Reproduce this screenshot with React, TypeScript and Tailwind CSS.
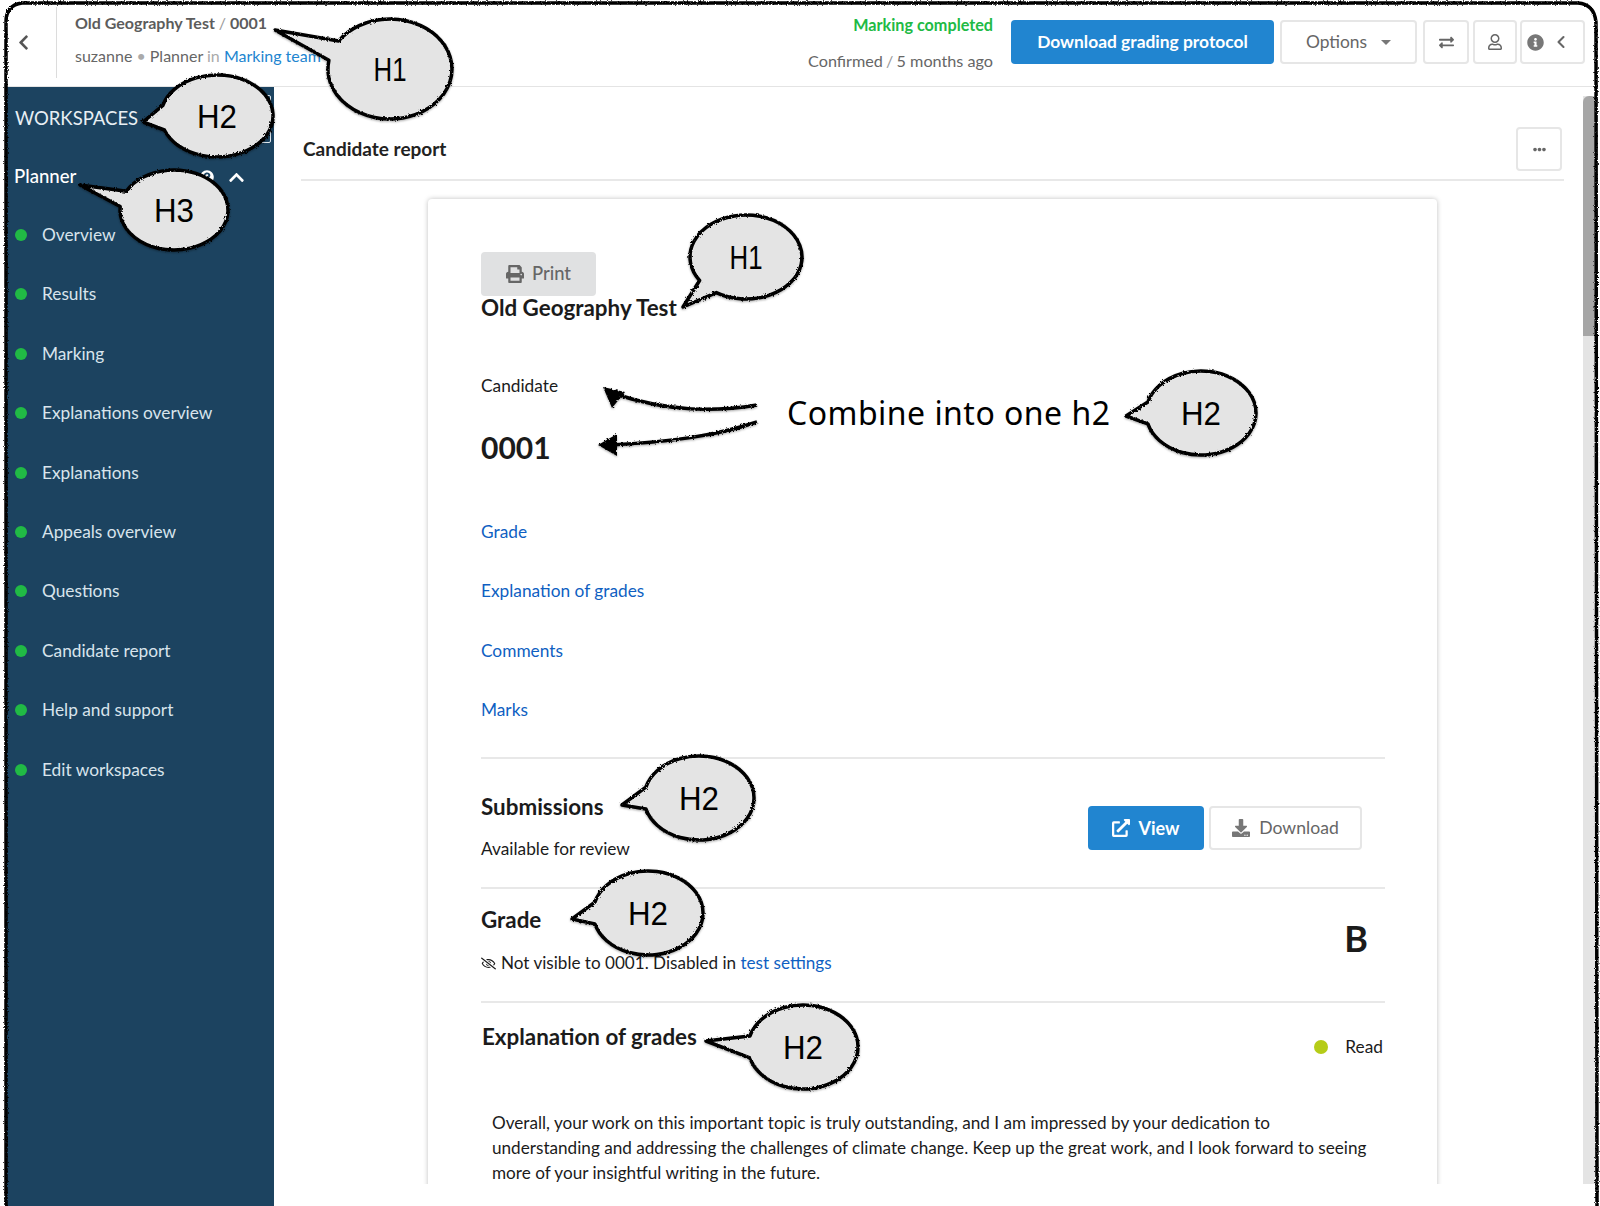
import React from "react";
import {
  FaChevronLeft,
  FaChevronUp,
  FaDownload,
  FaEllipsisH,
  FaExchangeAlt,
  FaExternalLinkAlt,
  FaInfoCircle,
  FaPrint,
  FaQuestionCircle,
  FaRegEyeSlash,
  FaRegUser,
} from "react-icons/fa";
import { ChevronLeft } from "lucide-react";

const navItems = [
  "Overview",
  "Results",
  "Marking",
  "Explanations overview",
  "Explanations",
  "Appeals overview",
  "Questions",
  "Candidate report",
  "Help and support",
  "Edit workspaces",
];

const links = ["Grade", "Explanation of grades", "Comments", "Marks"];

function Callout({
  cx,
  cy,
  rx,
  ry,
  a1,
  a2,
  tip,
  label,
}: {
  cx: number;
  cy: number;
  rx: number;
  ry: number;
  a1: number;
  a2: number;
  tip: [number, number];
  label: string;
}) {
  const p = (a: number) => {
    const r = (a * Math.PI) / 180;
    return `${(cx + rx * Math.cos(r)).toFixed(1)} ${(cy + ry * Math.sin(r)).toFixed(1)}`;
  };
  const d = `M${p(a1)} A${rx} ${ry} 0 1 1 ${p(a2)} L${tip[0]} ${tip[1]} Z`;
  return (
    <g>
      <path d={d} fill="#e4e4e4" stroke="#000" strokeWidth="3.5" strokeLinejoin="round" filter="url(#rough)" />
      <text
        x={cx}
        y={cy + 12}
        textAnchor="middle"
        fontSize="33"
        fontFamily="'Liberation Sans', sans-serif"
        fill="#000"
        textLength={label === "H1" ? 33 : 40}
        lengthAdjust="spacingAndGlyphs"
      >
        {label}
      </text>
    </g>
  );
}

function Annotations() {
  return (
    <svg className="absolute inset-0 pointer-events-none" width="1600" height="1206" viewBox="0 0 1600 1206">
      <defs>
        <filter id="rough" x="-10%" y="-10%" width="120%" height="120%">
          <feTurbulence type="fractalNoise" baseFrequency="0.55" numOctaves="2" seed="3" result="n" />
          <feDisplacementMap in="SourceGraphic" in2="n" scale="3" result="d" />
          <feDropShadow in="d" dx="0" dy="1" stdDeviation="1.2" floodColor="#000" floodOpacity="0.35" />
        </filter>
        <filter id="edge" filterUnits="userSpaceOnUse" x="0" y="0" width="1600" height="1206">
          <feTurbulence type="fractalNoise" baseFrequency="0.8" numOctaves="2" seed="5" result="n" />
          <feDisplacementMap in="SourceGraphic" in2="n" scale="3" />
        </filter>
      </defs>
      <path
        d="M6 1206 L6 22 Q6 5 22 3 L1578 3 Q1594 4 1596 22 L1597 1206"
        fill="none"
        stroke="#000"
        strokeWidth="3.5"
        filter="url(#edge)"
      />
      <Callout cx={390} cy={69} rx={62} ry={50} a1={214} a2={190} tip={[275, 30]} label="H1" />
      <Callout cx={217} cy={116} rx={56} ry={41} a1={195} a2={160} tip={[143, 122]} label="H2" />
      <Callout cx={174} cy={210} rx={54} ry={40} a1={208} a2={185} tip={[80, 185]} label="H3" />
      <Callout cx={746} cy={257} rx={56} ry={42} a1={146} a2={122} tip={[683, 307]} label="H1" />
      <Callout cx={1201} cy={413} rx={55} ry={42} a1={195} a2={165} tip={[1126, 416]} label="H2" />
      <Callout cx={699} cy={798} rx={55} ry={42} a1={195} a2={165} tip={[622, 805]} label="H2" />
      <Callout cx={648} cy={913} rx={55} ry={42} a1={195} a2={165} tip={[572, 919]} label="H2" />
      <Callout cx={803} cy={1047} rx={55} ry={42} a1={195} a2={165} tip={[706, 1041]} label="H2" />
      <text
        x="787"
        y="425"
        fontSize="32"
        fontFamily="'Noto Sans', sans-serif"
        fill="#000"
        textLength="323"
        lengthAdjust="spacing"
      >
        Combine into one h2
      </text>
      <g fill="none" stroke="#000" strokeWidth="3.5" filter="url(#rough)">
        <path d="M757 405 C715 412 670 412 615 394" />
        <path d="M757 422 C715 436 670 442 610 445" />
      </g>
      <g fill="#000" filter="url(#rough)">
        <path d="M603 387 L625 392 L612 408 Z" />
        <path d="M598 445 L617 434 L617 456 Z" />
      </g>
    </svg>
  );
}

function TopBar() {
  return (
    <header className="flex h-[87px] shrink-0 border-b border-[#e4e4e4] bg-white pr-[12px]">
      <div className="mt-[7px] flex h-[71px] w-[52px] items-center justify-center border-r border-[#dcdcdc] pr-[15px] text-[#555]">
        <FaChevronLeft className="h-[17px] w-[17px]" />
      </div>
      <div className="flex-1 pl-[18px] pt-[11px]">
        <div className="text-[16px] leading-6 font-bold text-[#5c5c5c]">
          Old Geography Test <span className="font-normal text-[#9a9a9a]">/</span> 0001
        </div>
        <div className="mt-[9px] text-[16px] leading-6 text-[#666]">
          suzanne <span className="text-[#aaa]">•</span> Planner <span className="text-[#aaa]">in</span>{" "}
          <span className="text-[#2185d0]">Marking team</span>
        </div>
      </div>
      <div className="mr-[18px] pt-[13px] text-right text-[16.2px]">
        <div className="leading-6 font-bold text-[#21ba45]">Marking completed</div>
        <div className="mt-[12px] leading-6 text-[#666]">
          Confirmed <span className="-mx-[1px] text-[#999]">/</span> 5 months ago
        </div>
      </div>
      <div className="flex items-start gap-[6px] pt-[20px] text-[#666]">
        <div className="flex h-[44px] w-[263px] items-center justify-center rounded-[4px] bg-[#2185d0] text-[17.4px] font-bold text-white">
          Download grading protocol
        </div>
        <div className="flex h-[44px] w-[137px] items-center justify-center gap-[14px] rounded-[4px] border-2 border-[#e6e6e6] text-[17.4px]">
          Options
          <span className="h-0 w-0 border-x-[5px] border-t-[5px] border-x-transparent border-t-[#777]" />
        </div>
        <div className="flex h-[44px] w-[46px] items-center justify-center rounded-[4px] border-2 border-[#e6e6e6]">
          <FaExchangeAlt className="h-[15px] w-[15px]" />
        </div>
        <div className="-ml-[2px] flex h-[44px] w-[44px] items-center justify-center rounded-[4px] border-2 border-[#e6e6e6]">
          <FaRegUser className="h-[16px] w-[16px]" />
        </div>
        <div className="-ml-[3px] flex h-[44px] w-[65px] items-center justify-center gap-[7px] rounded-[4px] border-2 border-[#e6e6e6] pr-[8px]">
          <FaInfoCircle className="h-[17px] w-[17px] text-[#777]" />
          <ChevronLeft className="h-[20px] w-[20px] text-[#666]" strokeWidth={2.5} />
        </div>
      </div>
    </header>
  );
}

function Sidebar() {
  return (
    <aside className="relative h-full w-[269px] shrink-0 bg-[#1c4360] text-[#d8e4ec]">
      <div className="absolute right-[3px] top-[8px] h-[13px] w-[10px] rounded-[2px] border border-[#dfe8ee]" />
      <div className="absolute right-[3px] top-[43px] h-[13px] w-[10px] rounded-[2px] border border-[#dfe8ee]" />
      <div className="pl-[10px] pt-[17px] text-[18.5px] leading-7 text-[#e8eff4]">WORKSPACES</div>
      <div className="mt-[31px] flex h-[28px] items-center pl-[9px] pr-[29px] text-[18.6px] font-medium text-white">
        <span className="flex-1">Planner</span>
        <FaQuestionCircle className="mr-[14px] h-[14px] w-[14px]" />
        <FaChevronUp className="h-[17px] w-[17px]" />
      </div>
      <nav className="mt-[32px] flex flex-col gap-[35.4px] pl-[10px]">
        {navItems.map((item) => (
          <div key={item} className="flex h-[24px] items-center gap-[15px] text-[17.3px]">
            <span className="h-[12px] w-[12px] rounded-full bg-[#21ba45]" />
            {item}
          </div>
        ))}
      </nav>
    </aside>
  );
}

function Divider() {
  return <div className="h-[2px] bg-[#e8e8e8]" />;
}

function Card() {
  return (
    <section className="ml-[154px] w-[1009px] rounded-t-[4px] bg-white pb-[60px] pl-[53px] pr-[52px] pt-[53px] text-[17.3px] text-[#1b1b1b] shadow-[0_0_5px_rgba(0,0,0,0.25)]">
      <div className="flex h-[44px] w-[115px] items-center justify-center gap-[8px] rounded-[4px] bg-[#e0e1e2] text-[18.4px] font-medium text-[#666]">
        <FaPrint className="h-[18px] w-[18px]" />
        Print
      </div>
      <h1 className="text-[22.4px] leading-6 font-bold">Old Geography Test</h1>
      <div className="mt-[54px] leading-6">Candidate</div>
      <div className="mt-[29px] text-[30px] leading-10 font-bold">0001</div>
      <div className="mt-[53px] flex flex-col gap-[35.4px]">
        {links.map((l) => (
          <div key={l} className="h-[24px] leading-6 text-[#0f5fc2]">
            {l}
          </div>
        ))}
      </div>
      <div className="mt-[35px]">
        <Divider />
      </div>
      <div className="flex h-[128px] justify-between">
        <div className="pt-[34px]">
          <h2 className="text-[22.4px] leading-7 font-bold">Submissions</h2>
          <p className="mt-[16px] leading-6">Available for review</p>
        </div>
        <div className="mr-[23px] mt-[47px] flex h-[44px] gap-[5px]">
          <div className="flex w-[116px] items-center justify-center gap-[8px] rounded-[4px] bg-[#2185d0] text-[18px] font-bold text-white">
            <FaExternalLinkAlt className="h-[18px] w-[18px]" />
            View
          </div>
          <div className="flex w-[153px] items-center justify-center gap-[9px] rounded-[4px] border-2 border-[#e6e6e6] text-[17.6px] text-[#666]">
            <FaDownload className="h-[18px] w-[18px] text-[#777]" />
            Download
          </div>
        </div>
      </div>
      <Divider />
      <div className="flex h-[112px] justify-between">
        <div className="pt-[17px]">
          <h2 className="text-[22.4px] leading-7 font-bold">Grade</h2>
          <p className="mt-[17px] flex items-center text-[17.1px] leading-6">
            <FaRegEyeSlash className="mr-[5px] h-[15px] w-[15px]" />
            <span>
              Not visible to 0001. Disabled in <span className="text-[#0f5fc2]">test settings</span>
            </span>
          </p>
        </div>
        <div className="mr-[17px] mt-[29px] text-[36px] leading-10 font-bold">B</div>
      </div>
      <Divider />
      <div className="flex h-[85px] justify-between">
        <h2 className="ml-[1px] pt-[20px] text-[22.4px] leading-7 font-bold">Explanation of grades</h2>
        <div className="mr-[2px] mt-[32px] flex h-[24px] items-center gap-[17px]">
          <span className="h-[14px] w-[14px] rounded-full bg-[#b5cc18]" />
          Read
        </div>
      </div>
      <p className="ml-[11px] mt-[23px] w-[880px] text-[17.15px] leading-[24.7px]">
        Overall, your work on this important topic is truly outstanding, and I am impressed by your dedication to
        understanding and addressing the challenges of climate change. Keep up the great work, and I look forward to
        seeing more of your insightful writing in the future.
      </p>
    </section>
  );
}

export default function App() {
  return (
    <div className="relative h-[1206px] w-[1600px] overflow-hidden bg-white pl-[5px] pr-[3px] font-['Lato',sans-serif]">
      <div className="flex h-full flex-col">
        <TopBar />
        <div className="flex min-h-0 flex-1">
          <Sidebar />
          <div className="flex h-[1097px] min-w-0 flex-1 overflow-hidden">
            <main className="min-w-0 flex-1 overflow-hidden">
              <div className="ml-[27px] mr-[19px] flex h-[94px] items-end justify-between border-b-2 border-[#e8e8e8] pb-[8px] pl-[2px] pr-[2px]">
                <span className="mb-[8px] text-[19px] leading-7 font-bold text-[#222]">Candidate report</span>
                <div className="flex h-[44px] w-[46px] items-center justify-center rounded-[4px] border-2 border-[#e6e6e6] text-[#666]">
                  <FaEllipsisH className="h-[13px] w-[13px]" />
                </div>
              </div>
              <div className="pt-[18px]">
                <Card />
              </div>
            </main>
            <div className="flex w-[14px] shrink-0 flex-col pt-[9px]">
              <div className="flex-1 bg-[#e4e4e4]">
                <div className="h-[240px] rounded-t-[6px] bg-[#a6a6a6]" />
              </div>
            </div>
          </div>
        </div>
      </div>
      <Annotations />
    </div>
  );
}
